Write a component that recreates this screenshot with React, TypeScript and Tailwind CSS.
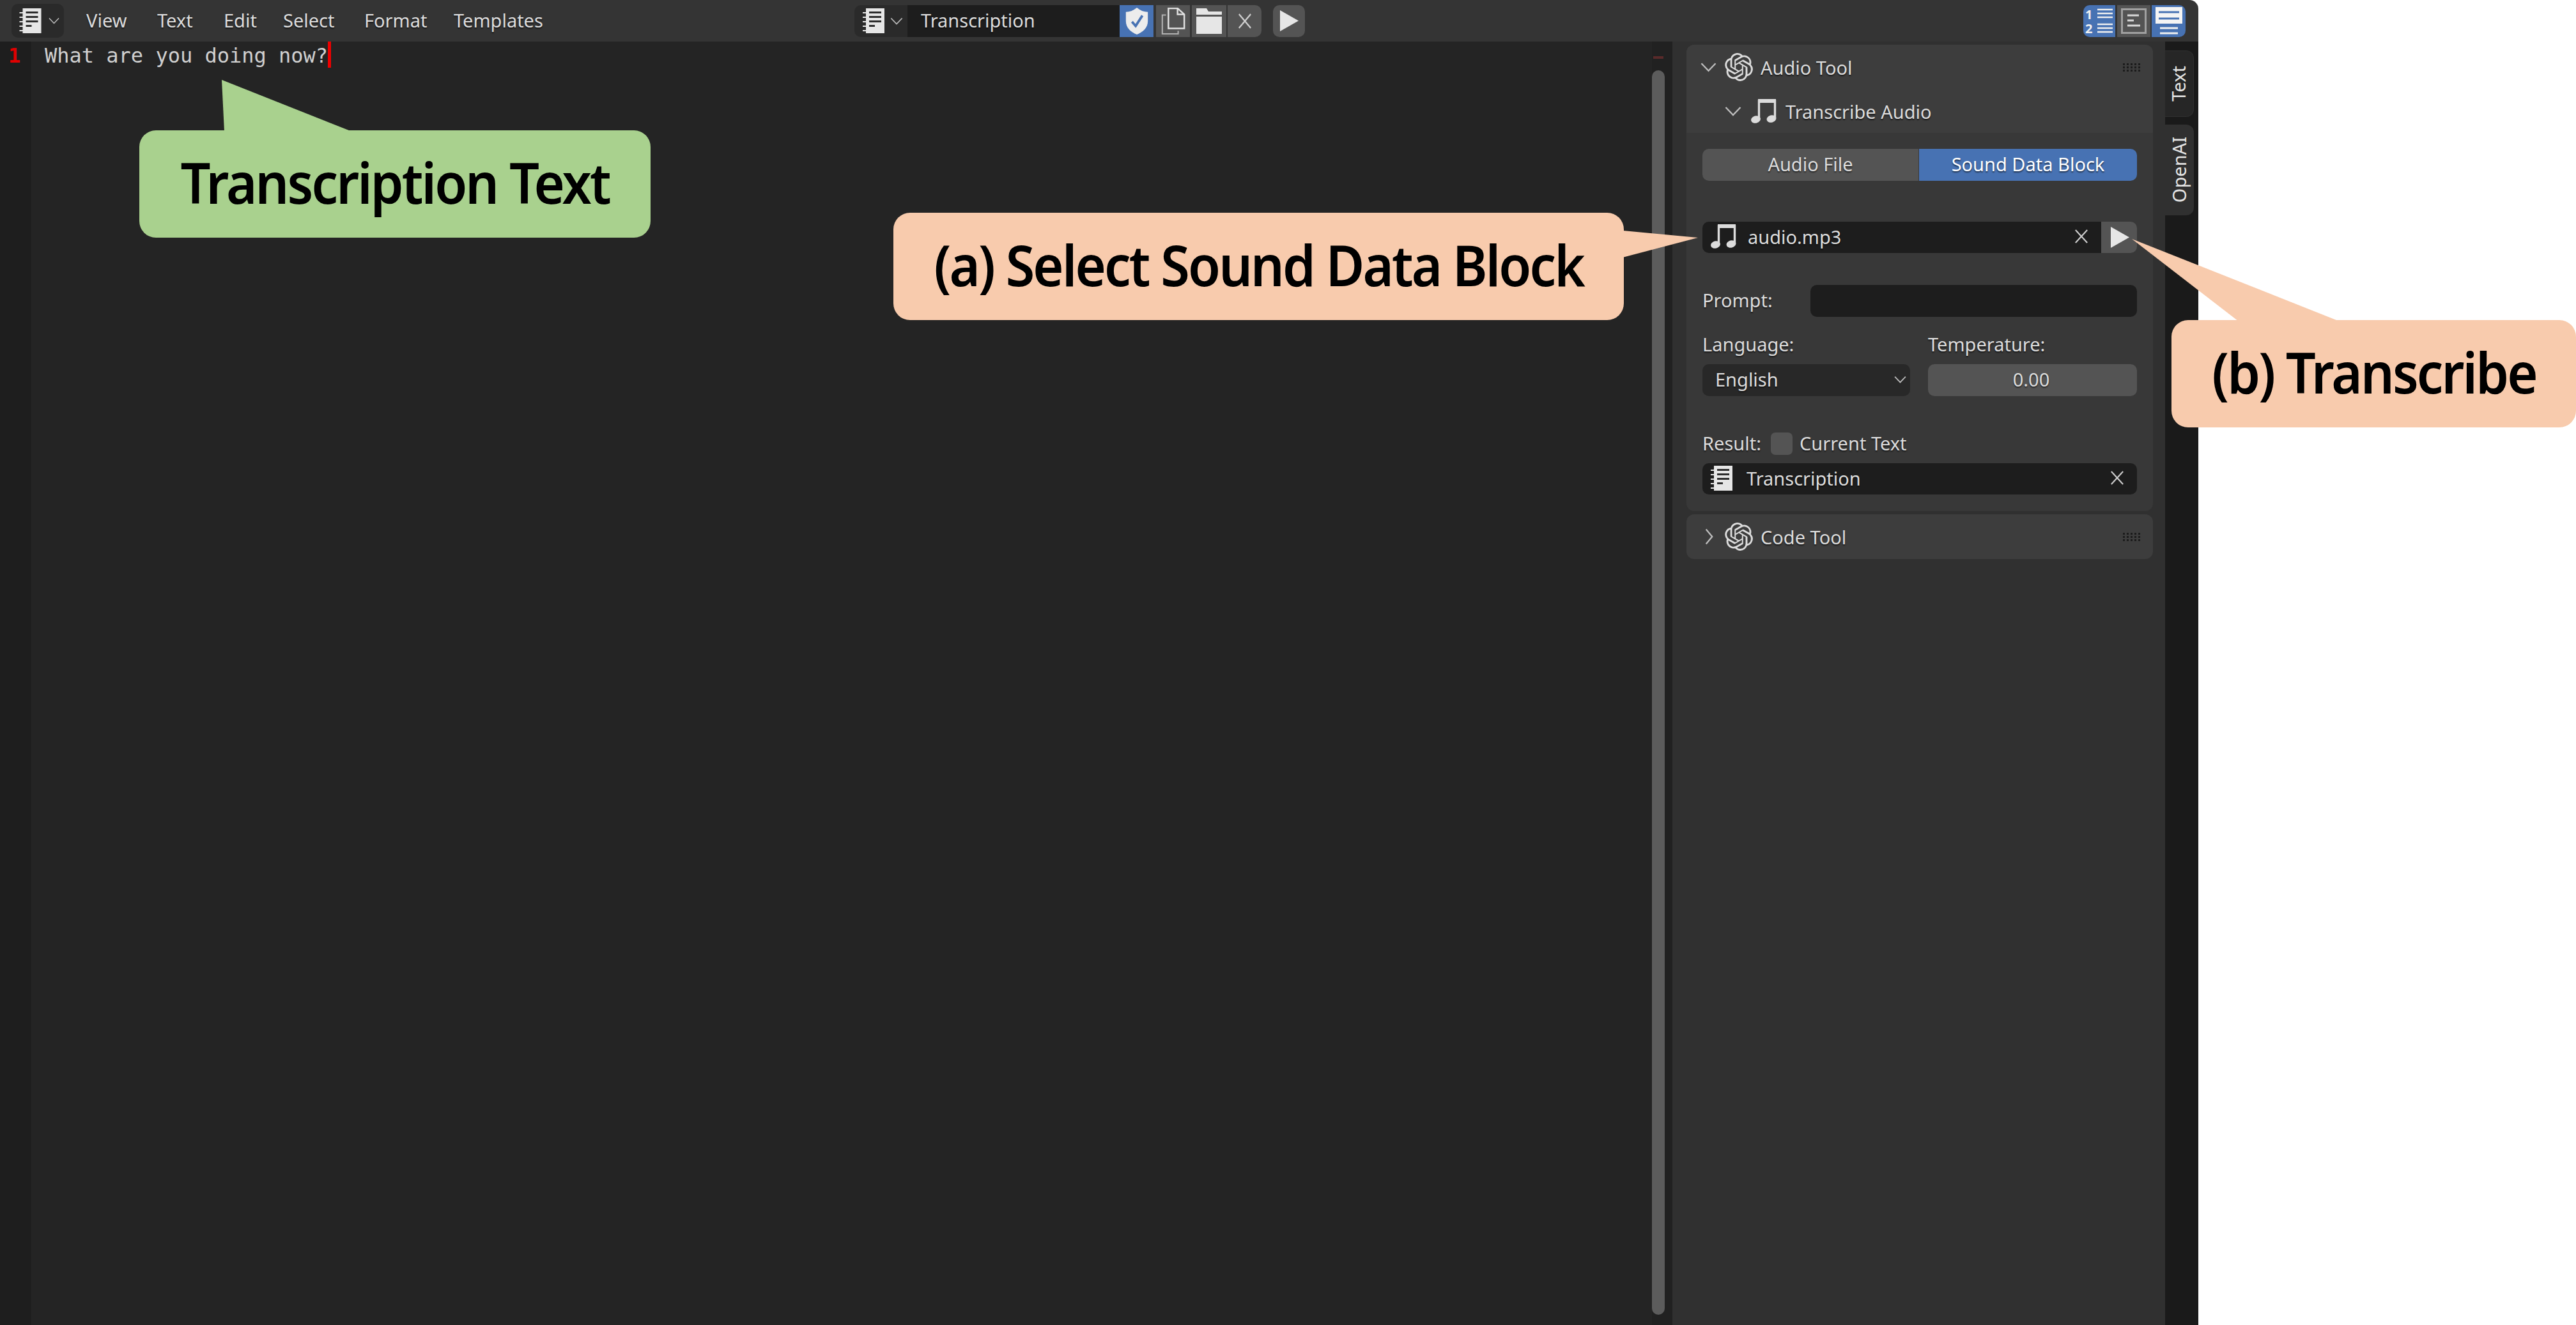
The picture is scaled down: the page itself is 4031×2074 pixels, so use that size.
import React from "react";
import { SiOpenai } from "react-icons/si";

const ui = "font-['Noto_Sans',sans-serif] text-[29px] leading-none text-[#dcdcdc] [text-shadow:0_2px_2px_rgba(0,0,0,0.55)] whitespace-nowrap pb-[3px]";
const callout = "font-['Noto_Sans',sans-serif] font-semibold text-black whitespace-nowrap text-[88px] tracking-[-3px] scale-x-[0.94] pb-[6px]";

function Notebook({ className = "" }: { className?: string }) {
  return (
    <svg viewBox="0 0 34 39" className={className}>
      <path fill="#e6e6e6" d="M5 0h29v39H5v-3H0v-2h5v-5H0v-2h5v-5H0v-2h5v-5H0v-2h5V8H0V6h5z" />
      <path fill="#2c2c2c" d="M10 5h19v3H10zM10 12h19v3H10zM10 19h19v3H10zM10 26h9v3h-9z" />
    </svg>
  );
}

function Music({ className = "" }: { className?: string }) {
  return (
    <svg viewBox="0 0 41 38" className={className}>
      <path fill="none" stroke="#dcdcdc" strokeWidth="3.4" d="M12.5 32V3h25v27" />
      <path fill="#dcdcdc" d="M11 0h28v6H11z" />
      <ellipse cx="7.5" cy="32" rx="7.5" ry="5.6" fill="#dcdcdc" transform="rotate(-15 7.5 32)" />
      <ellipse cx="32" cy="31" rx="7.5" ry="5.6" fill="#dcdcdc" transform="rotate(-15 32 31)" />
    </svg>
  );
}

function Chevron({ dir = "down", className = "" }: { dir?: "down" | "right"; className?: string }) {
  return (
    <svg viewBox="0 0 26 16" className={className} overflow="visible">
      <path
        d={dir === "down" ? "M1.5 2 13 14 24.5 2" : "M9 -4 19 8 9 20"}
        fill="none"
        stroke="#bdbdbd"
        strokeWidth="2.4"
      />
    </svg>
  );
}

function Cross({ className = "" }: { className?: string }) {
  return (
    <svg viewBox="0 0 24 24" className={className} preserveAspectRatio="none">
      <path d="M2 2 22 22M22 2 2 22" stroke="#cfcfcf" strokeWidth="2.4" fill="none" />
    </svg>
  );
}

function Play({ className = "" }: { className?: string }) {
  return (
    <svg viewBox="0 0 29 33" className={className}>
      <path d="M0 0 29 16.5 0 33z" fill="#e6e6e6" />
    </svg>
  );
}

function Grip() {
  return (
    <svg viewBox="0 0 30 15" className="w-[30px] h-[15px] block">
      {[0, 1, 2].map((r) =>
        [0, 1, 2, 3, 4].map((c) => (
          <rect key={`${r}-${c}`} x={c * 6 + 1} y={r * 5 + 1} width="3" height="3" fill="#1c1c1c" />
        ))
      )}
    </svg>
  );
}

function PanelHeader({ title, open }: { title: string; open: boolean }) {
  return (
    <div className="flex items-center h-[70px] pl-[22px] pr-[18px]">
      <div className="w-[38px] flex shrink-0">
        <Chevron dir={open ? "down" : "right"} className="w-[25px] h-[16px]" />
      </div>
      <SiOpenai className="w-[44px] h-[44px] text-[#dcdcdc]" />
      <span className={`${ui} ml-[12px] pt-[3px]`}>{title}</span>
      <span className="ml-auto">
        <Grip />
      </span>
    </div>
  );
}

function Editor() {
  return (
    <div className="w-[2617px] shrink-0 flex bg-[#242424]">
      <div className="w-[50px] bg-[#1e1e1e] border-r border-[#262626] pl-[13px] pt-[3px]">
        <span className="font-['DejaVu_Sans_Mono',monospace] font-bold text-[32px] leading-[38px] text-[#e00000]">1</span>
      </div>
      <div className="flex-1 pl-[20px] flex items-start">
        <span className="font-['DejaVu_Sans_Mono',monospace] text-[32px] leading-[38px] mt-[3px] text-[#d0d0d0] whitespace-pre">
          What are you doing now?
        </span>
        <div className="w-[5px] h-[41px] bg-[#ee0000]" />
      </div>
      <div className="w-[32px] flex flex-col bg-[#212121]">
        <div className="w-[16px] h-[4px] mt-[23px] bg-[#5a2a2a] ml-[2px]" />
        <div className="w-[20px] flex-1 mt-[18px] mb-[16px] rounded-[10px] bg-[#5c5c5c]" />
      </div>
    </div>
  );
}

function TopBar() {
  return (
    <div className="h-[65px] flex items-center bg-[#343434] shrink-0 rounded-tr-[14px]">
      <div className="w-[1337px] flex items-center shrink-0 pl-[18px]">
        <div className="w-[82px] h-[53px] rounded-[10px] bg-[#2a2a2a] flex items-center pl-[12px] gap-[11px]">
          <Notebook className="w-[35px] h-[39px]" />
          <Chevron className="w-[17px] h-[11px]" />
        </div>
        <div className="flex ml-[35px]">
          <span className={`${ui} w-[111px]`}>View</span>
          <span className={`${ui} w-[104px]`}>Text</span>
          <span className={`${ui} w-[93px]`}>Edit</span>
          <span className={`${ui} w-[127px]`}>Select</span>
          <span className={`${ui} w-[140px]`}>Format</span>
          <span className={ui}>Templates</span>
        </div>
      </div>
      <div className="w-[1923px] flex items-center shrink-0 h-[50px]">
        <div className="w-[83px] h-full rounded-l-[10px] bg-[#2a2a2a] flex items-center pl-[13px] gap-[9px]">
          <Notebook className="w-[34px] h-[39px]" />
          <Chevron className="w-[20px] h-[12px]" />
        </div>
        <div className={`${ui} w-[332px] h-full bg-[#1d1d1d] flex items-center pl-[21px]`}>Transcription</div>
        <div className="w-[53px] h-full bg-[#4772b3] flex items-center justify-center">
          <svg viewBox="0 0 36 44" className="w-[36px] h-[42px]">
            <path d="M18 0C24 5 30 7 36 7v15c0 11-8 18-18 22C8 40 0 33 0 22V7C6 7 12 5 18 0z" fill="#ececec" />
            <path d="M10 23 16 30 27 13" fill="none" stroke="#4772b3" strokeWidth="4" />
          </svg>
        </div>
        <div className="w-[53px] h-full ml-[4px] bg-[#545454] flex items-center justify-center">
          <svg viewBox="0 0 40 44" className="w-[40px] h-[42px]">
            <path d="M12 1h15l11 10v23H12z" fill="none" stroke="#e0e0e0" strokeWidth="2.6" />
            <path d="M27 1v10h11" fill="none" stroke="#e0e0e0" strokeWidth="2.6" />
            <path d="M8 12H2v31h26v-5" fill="none" stroke="#b0b0b0" strokeWidth="2.2" />
          </svg>
        </div>
        <div className="w-[54px] h-full ml-[3px] bg-[#545454] flex items-center justify-center">
          <svg viewBox="0 0 40 40" className="w-[40px] h-[40px]">
            <path d="M0 0h16l3 5h21v5H0z" fill="#e6e6e6" />
            <path d="M0 13h40v27H0z" fill="#e6e6e6" />
          </svg>
        </div>
        <div className="w-[53px] h-full ml-[2px] rounded-r-[10px] bg-[#545454] flex items-center justify-center">
          <Cross className="w-[22px] h-[26px]" />
        </div>
        <div className="w-[50px] h-full ml-[18px] rounded-[10px] bg-[#545454] flex items-center justify-center">
          <Play className="w-[29px] h-[33px]" />
        </div>
      </div>
      <div className="flex items-center h-[50px]">
        <div className="w-[50px] h-full rounded-l-[10px] bg-[#4772b3] flex items-center justify-center">
          <svg viewBox="0 0 46 46" className="w-[46px] h-[46px]" overflow="visible">
            <text x="1" y="20" fontSize="20" fontWeight="700" fill="#f0f0f0" fontFamily="Noto Sans, sans-serif">1</text>
            <text x="1" y="42" fontSize="20" fontWeight="700" fill="#f0f0f0" fontFamily="Noto Sans, sans-serif">2</text>
            <path d="M20 5h24M20 11h24M20 17h24M20 28h24M20 34h24M20 40h24" stroke="#f0f0f0" strokeWidth="2.4" />
          </svg>
        </div>
        <div className="w-[52px] h-full ml-[3px] bg-[#545454] flex items-center justify-center">
          <svg viewBox="0 0 40 40" className="w-[40px] h-[40px]">
            <rect x="1.5" y="1.5" width="37" height="37" fill="none" stroke="#a0a0a0" strokeWidth="3" />
            <path d="M10 11h18M10 19h10M10 27h20" stroke="#d8d8d8" strokeWidth="3" />
          </svg>
        </div>
        <div className="w-[53px] h-full ml-[2px] rounded-r-[10px] bg-[#4772b3] flex items-center justify-center">
          <svg viewBox="0 0 42 44" className="w-[42px] h-[44px]">
            <rect x="0" y="0" width="42" height="26" fill="#f4f4f4" />
            <path d="M5 8h32M5 18h32" stroke="#4772b3" strokeWidth="3" />
            <path d="M7 33h28M7 41h28" stroke="#f0f0f0" strokeWidth="3" />
          </svg>
        </div>
      </div>
    </div>
  );
}

function Sidebar() {
  return (
    <div className="w-[771px] shrink-0 bg-[#303030] pl-[22px] pr-[19px] pt-[5px] flex flex-col gap-[5px]">
      <div className="rounded-[12px] bg-[#383838] overflow-hidden">
        <div className="bg-[#3d3d3d] h-[138px] flex flex-col">
          <PanelHeader title="Audio Tool" open />
          <div className="flex items-center h-[68px] pl-[60px]">
            <Chevron className="w-[26px] h-[16px]" />
            <Music className="w-[41px] h-[38px] ml-[15px]" />
            <span className={`${ui} ml-[13px] pt-[3px]`}>Transcribe Audio</span>
          </div>
        </div>
        <div className="px-[25px] pt-[25px] pb-[26px] flex flex-col">
          <div className="flex h-[50px]">
            <div className={`${ui} w-[338px] rounded-l-[10px] bg-[#545454] flex items-center justify-center`}>Audio File</div>
            <div className={`${ui} flex-1 ml-[1px] rounded-r-[10px] bg-[#4772b3] text-white flex items-center justify-center`}>Sound Data Block</div>
          </div>
          <div className="flex h-[49px] mt-[64px]">
            <div className={`${ui} w-[624px] rounded-l-[10px] bg-[#1d1d1d] flex items-center pl-[13px]`}>
              <Music className="w-[41px] h-[38px]" />
              <span className="ml-[17px]">audio.mp3</span>
              <Cross className="w-[22px] h-[24px] ml-auto mr-[20px]" />
            </div>
            <div className="flex-1 rounded-r-[10px] bg-[#545454] flex items-center pl-[15px]">
              <Play className="w-[29px] h-[33px]" />
            </div>
          </div>
          <div className="flex items-center h-[50px] mt-[50px]">
            <span className={ui}>Prompt:</span>
            <div className="w-[511px] h-full ml-auto rounded-[10px] bg-[#1d1d1d]" />
          </div>
          <div className="flex gap-[28px] mt-[29px]">
            <div className="w-[325px] flex flex-col gap-[15px]">
              <span className={`${ui} h-[30px] flex items-center`}>Language:</span>
              <div className={`${ui} h-[50px] rounded-[10px] bg-[#282828] flex items-center pl-[20px]`}>
                English
                <Chevron className="w-[19px] h-[12px] ml-auto mr-[6px]" />
              </div>
            </div>
            <div className="flex-1 flex flex-col gap-[15px]">
              <span className={`${ui} h-[30px] flex items-center`}>Temperature:</span>
              <div className={`${ui} h-[50px] rounded-[10px] bg-[#545454] flex items-center justify-center pr-[4px]`}>0.00</div>
            </div>
          </div>
          <div className="flex items-center h-[35px] mt-[57px]">
            <span className={`${ui} w-[107px]`}>Result:</span>
            <div className="w-[34px] h-[35px] rounded-[7px] bg-[#545454]" />
            <span className={`${ui} ml-[11px]`}>Current Text</span>
          </div>
          <div className={`${ui} h-[49px] mt-[13px] rounded-[10px] bg-[#1d1d1d] flex items-center pl-[13px]`}>
            <Notebook className="w-[34px] h-[39px]" />
            <span className="ml-[22px]">Transcription</span>
            <Cross className="w-[22px] h-[24px] ml-auto mr-[20px]" />
          </div>
        </div>
      </div>
      <div className="rounded-[12px] bg-[#3d3d3d]">
        <PanelHeader title="Code Tool" open={false} />
      </div>
    </div>
  );
}

function TabStrip() {
  const tab = "w-[45px] rounded-r-[12px] flex items-center justify-center pr-[3px] font-['Noto_Sans',sans-serif] text-[29px] leading-none text-[#e4e4e4] [writing-mode:vertical-rl]";
  return (
    <div className="w-[52px] shrink-0 bg-[#1a1a1a] flex flex-col pt-[14px] gap-[12px]">
      <div className={`${tab} h-[104px] bg-[#262626] border border-l-0 border-[#303030]`}>
        <span className="rotate-180">Text</span>
      </div>
      <div className={`${tab} h-[142px] bg-[#303030]`}>
        <span className="rotate-180">OpenAI</span>
      </div>
    </div>
  );
}

function Callouts() {
  const box = "absolute h-[168px] rounded-[26px] flex items-center justify-center";
  return (
    <>
      <svg viewBox="0 0 4031 2074" className="absolute inset-0 w-[4031px] h-[2074px] pointer-events-none">
        <polygon points="347,125 351,206 551,206" fill="#a9d18e" />
        <polygon points="2539,361 2657,372 2539,403" fill="#f8cbad" />
        <polygon points="3336,374 3503,503 3661,503" fill="#f8cbad" />
      </svg>
      <div className={`${box} left-[218px] top-[204px] w-[800px] bg-[#a9d18e]`}>
        <span className={callout}>Transcription Text</span>
      </div>
      <div className={`${box} left-[1398px] top-[333px] w-[1143px] bg-[#f8cbad]`}>
        <span className={callout}>(a) Select Sound Data Block</span>
      </div>
      <div className={`${box} left-[3398px] top-[501px] w-[633px] bg-[#f8cbad]`}>
        <span className={callout}>(b) Transcribe</span>
      </div>
    </>
  );
}

export default function App() {
  return (
    <div className="relative w-[4031px] h-[2074px] bg-white overflow-hidden">
      <div className="w-[3440px] h-full flex flex-col">
        <TopBar />
        <div className="flex-1 flex min-h-0">
          <Editor />
          <Sidebar />
          <TabStrip />
        </div>
      </div>
      <Callouts />
    </div>
  );
}
